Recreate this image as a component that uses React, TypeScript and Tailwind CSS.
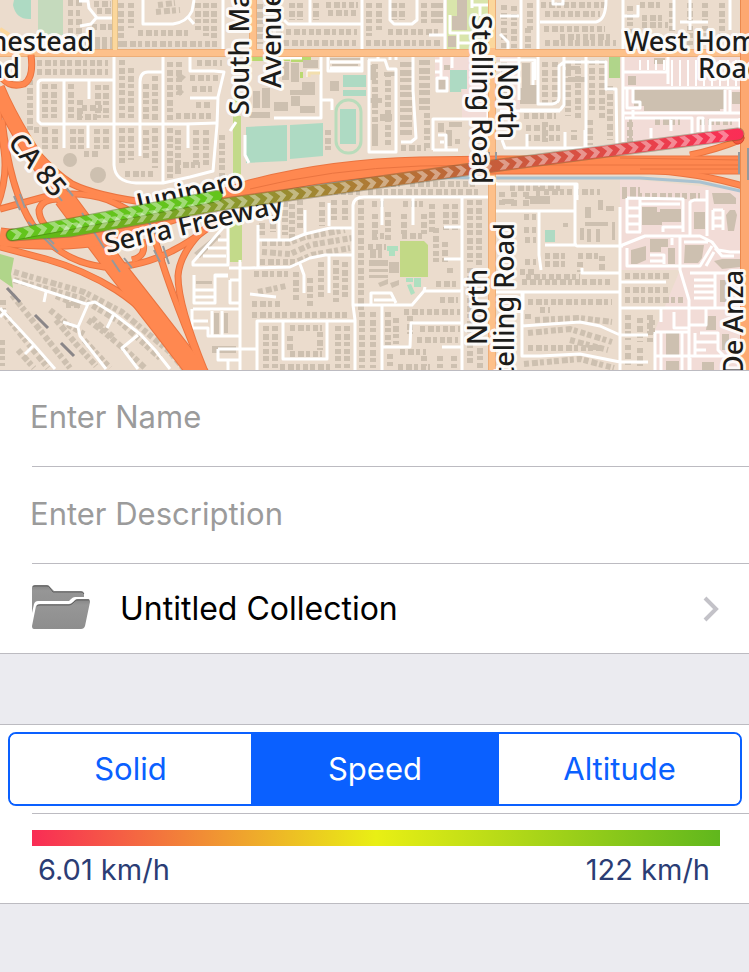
import React, { useState } from "react";

/* ---------- Map data ---------- */

const pinkAreas = [
  "M435 55H488V118H462V80H435Z",
  "M621 56H741V146H621Z",
  "M480 55H520V118H500V60H480Z",
  "M620 178L740 190V370H655V330L680 270H620Z",
];

const parks: { d: string; fill: string }[] = [
  { d: "M14 0H31V19Q16 20 13 5Z", fill: "#aedac3" },
  { d: "M38 0H63V35H38Z", fill: "#c5dabd" },
  { d: "M447 0H491V50H447Z", fill: "#d9e5ab" },
  { d: "M233 116H241V176H233Z", fill: "#c3da8a" },
  { d: "M229 225L242 215V262H230Z", fill: "#c3da8a" },
  { d: "M234 95L238 92V112H234ZM240 64H250V68H240ZM250 57H290V61H250ZM291 57H311V62H291ZM300 72H303V78H300Z", fill: "#b9d970" },
  { d: "M246 127L287 125V161L246 163ZM290 125L323 123V156L290 159Z", fill: "#aedac3" },
  { d: "M343 75H366V87H343ZM343 90H366V96H343ZM340 109H356V144H340Z", fill: "#aedac3" },
  { d: "M450 70H467V89H461V92H450Z", fill: "#aedac3" },
  { d: "M609 55H620V78H609Z", fill: "#b0d58a" },
  { d: "M545 230H555V242H545Z", fill: "#aedac3" },
  { d: "M400 241H424L428 245V277H400Z", fill: "#c2d986" },
  { d: "M387 246H398V251H395V256H389V251H387ZM406 278H413V282H406ZM414 278H421V287H414ZM407 285L411 284L415 293L411 295Z", fill: "#aee0c0" },
  { d: "M0 254L14 258L11 274L13 288L0 279Z", fill: "#b0d58a" },
];

const smallHouses = [
  "M68 3H82M68 13H80M68 22H82M68 31H84M94 4H111M97 11H112M92 27H112M72 40H112M72 46H112",
  "M121 3V50M131 3V28M138 33H190M122 44H220M198 3V30M206 3V36M214 3V40M158 5L175 3M156 12L180 10",
  "M37 63H108M37 72H108M30 80V130M45 84V118M54 84V118M71 84V118M80 100V118M98 85V118M106 85V118M82 108H104M77 117H100",
  "M45 129V150M55 129V150M73 129V150M81 129V150M97 129V150M106 129V150M34 130H50M84 154H98",
  "M122 60V120M131 68V120M146 84V120M155 76V120M170 62V120M179 62V95M122 128V165M131 128V160M146 130V160M155 128V168M170 128V178M178 130V175M197 63H222M190 78H218M192 89H214M196 105H212M176 116H212M196 130V168M206 130V165M222 135V180M125 174H155M175 165H200",
  "M260 4V44M268 30H282M292 3V20M300 3V20M316 3V20M326 5H358M328 13H358M286 32H357M284 43H356M369 3V36M379 3V30M394 3V20M402 3V20M424 3V26M434 3V26M440 3V26M388 32H440M366 43H440",
  "M375 64V145M388 72V145M403 62V135M409 62V135M422 60V110M427 60V150M401 148H426M328 130V150",
  "M530 3V30M541 5H605M545 14H600M504 5V48M514 6V48M528 28V48M544 29H605M545 43H616M560 37H612M640 5H660M642 18H662M642 25H668M690 3V45M705 3V45M722 3V40M630 6V44M672 3V40",
  "M504 62V108M545 62V104M555 62V104M568 62V116M578 60V120M592 60V110M602 60V118M610 86V140M574 140V130M590 120V145M524 116H556M526 128H560M526 138H560M545 122V145M630 122V145M655 122H680M700 122H732",
  "M14 272L84 292L122 312L170 352L184 369M14 280L80 298L120 322L160 358M56 296L80 306M12 295L40 330L70 368M3 300V312L30 346L48 368M50 310L70 326L84 334M56 320L76 344L96 366M88 320L104 332L130 354L146 369M84 340L110 368M92 318L114 338M2 340V366M18 350L34 368M66 305H80",
  "M285 202V235M292 204V240M300 200V230M322 202V226M334 200V222M345 200V222M262 215V236M273 215V232M262 243H288L305 237L345 230M262 252L290 254L310 245L352 238M260 262H296L312 255L350 248M254 274H288M258 292L286 286M252 304H282M310 278V306M321 262V300M336 260V302M345 262V300M296 272V302M252 315H350",
  "M361 200V310M372 204H384M375 214V240M388 212V240M403 204H424M404 214V236M424 214V236M432 204V232M436 228V262M446 204V230M455 204V230M372 236H384M402 236H424M368 247H386M445 242V262M436 284H458M440 300H458M450 268V276",
  "M266 326V368M275 326V368M290 328H322M290 336V352M320 332V350M290 354H322M338 326V368M347 326V368M362 312V368M373 312V368M388 312V345M396 318V344M410 316V334M404 312H460M420 329H460M417 340H458M390 354V366M400 352H426M424 356V366M440 356V368M454 356V368M280 367H330M398 367H430",
  "M470 200V262M479 200V268M470 268V366M480 340V368M502 192V205M514 192V206M526 192V206",
  "M524 217H536M524 230H536M525 240H536M525 262H536M545 256H568M545 264H568M578 256H598M580 262V272M602 256V272M520 272H536M522 282H612M526 277H580",
  "M528 302H612M528 314V322M540 310H550M535 320L580 318L612 322M528 333L570 329L612 342M570 340L608 350M528 348H600M524 364L580 359L614 368",
  "M625 276H670M625 290H668M625 300H684M628 315V340M640 318V342M650 315V342M628 345V366M640 348V366M652 320V336",
  "M622 190H640M622 196H700M544 192H600M368 192H480M510 188H560",
  "M318 192H360M368 184H400M410 184H478",
];

const bigBuildings =
  "M457 0H467V30H452V16H457ZM448 36H456V47H448ZM303 60H318V68H303ZM291 63H299V82H291ZM302 82H315V95H290V90H302ZM291 96H300V106H291ZM300 106H315V113H300ZM274 102H288V111H274ZM262 88H270V108H262ZM282 62H289V80H282ZM253 91H260V108H253ZM246 112H270V118H250ZM330 81H339V91H330ZM330 58H360V60H330ZM332 64H358V66H332ZM370 65H376V80H370ZM384 72H396V76H384ZM370 98H382V103H370ZM380 114H392V121H380ZM372 127H378V146H372ZM438 80H446V90H438ZM438 123H444V132H438ZM449 122H462V127H449ZM446 130H452V146H446ZM455 139H460V144H455ZM444 65H450V70H444ZM522 63H530V85H538V104H520V88H522ZM634 90L724 89V109H720V111H644V106H634ZM732 92H740V104H732ZM628 76H636V85H628ZM654 58H665V64H654ZM566 66H580V70H566ZM568 77H585V82H568ZM629 119H632V140H629ZM644 207H657V212H660V209H681V222H662V225H642V207ZM694 212H705V229H694ZM650 239H668V247H661V252H650ZM668 248H675V264H668ZM631 250L646 246V260L637 264H631ZM685 245H704L702 258L698 263H684ZM712 193H730L736 198V204H714ZM730 210H735L737 215L734 231H728L726 215ZM714 261L722 259H740V267L722 269ZM666 333H679V355H666ZM666 361H679V370H666ZM702 362H714V370H702ZM720 280H727V302H720ZM708 316H716V330H706ZM722 334H729V350H722ZM370 249H376V258H370ZM378 249H382V258H378ZM369 260H388V266H369ZM369 269H388V272H369ZM369 275H388V278H369ZM389 262H399V273H389ZM378 283L388 279V284L380 287ZM390 283L399 280V285L392 288ZM563 223H568V227H563ZM180 73L186 77L182 81L176 77ZM180 88L184 92L180 96L176 92ZM212 346H236V353H212ZM214 320V334H219V313H214ZM224 313H228V333H224ZM196 281H212V284H196ZM194 253L218 233L221 236L200 258ZM525 196H550V204H530V199H525ZM502 199H514V204H502ZM536 187H540V202H536ZM598 200H603V210H598ZM606 206H614V211H606ZM585 222H608V226H585ZM580 228H584V240H580ZM587 229H591V242H587ZM596 229H600V242H596ZM612 222H615V240H612ZM585 207H591V218H585Z";

const streets = [
  "M79 1H88L89 8L97 18H114M97 17L91 24L80 26",
  "M143 0V24H173Q187 22 192 11L194 0M188 17L194 24M223 0V50",
  "M114 55V165Q115 182 136 183H163L190 177L213 171L217 125L218 97L224 72L214 71H190V55",
  "M163 55V182M162 72H148Q140 72 140 82V156M114 80H42Q38 80 38 84V121L41 124H186L217 123",
  "M64 80V148M89 80V99M88 125V148M188 125V148M190 98H218M230 131L236 122M245 135V155L249 163",
  "M284 20L288 24H362M310 0V23M362 0V50M390 0V20L394 24H412L417 20V0M445 0V50M429 35H445",
  "M450 15V33H490M458 33V50M458 43H480M472 5H488M472 0V8M480 4V16",
  "M268 58H302M321 55V118H274M308 77V71H321M328 55V71H362V55M330 62H362M330 68H362",
  "M368 60H385L388 69H396V152H369V60M378 60V56M390 60V56M396 60V56M413 55V90L416 138L411 142H401",
  "M441 55V78H437V91H447V78H441M441 61H435M441 72H435M452 55V68M433 150V119H488V112M433 150H458M438 135H446V150M440 142H444M321 100H332V110",
  "M500 16H519M521 0V50M500 34L508 42V50M538 0V50M540 22H596Q606 20 606 0M553 0V4H563V0",
  "M623 0V50M674 0V30M690 0V20M730 0V30M680 22H708M690 22V30M623 16H638V5",
  "M538 55V104H552Q559 103 559 98V66L564 62H606V89H616L617 150M564 56V105L560 110H520M586 56V148M500 111H560M502 140L505 148H590L617 145V150M527 134V148M565 132V148M585 130V148",
  "M623 56V142M623 72H667V60M623 88H740M668 56V84M623 113H740M625 118H692V134M698 132V118H703V132M710 132V120H740M740 118V130M633 88V102H640V108H627V88M725 90V112M730 90V112M633 118V110M671 120V131M651 128V138",
  "M519 55V100M500 60H535V80M533 62V85",
  "M13 280L86 304L95 302L114 314L140 334L155 350L170 369M46 292L44 302M88 304L78 327L80 336L106 369M63 322L78 327M114 314L107 328M138 335L122 348L138 369M0 308L34 345L55 369M0 317L6 310M34 345L25 354",
  "M193 265H228V222L193 262ZM203 256H226M208 248H228M218 240H228M240 260V370M229 268H250M194 275V303H215V275H228M194 297H216M194 290H216M215 276H228M194 295V303M193 309H240M230 280H240M230 280V303H240M192 309V328H208V336H240M212 311V335M222 311V335M193 321H208M218 349H250M218 349V360H228V370M218 360H240",
  "M258 225V267M279 215V240M305 210V234M329 203V226M257 240H290L305 234L330 228H354M250 268L290 267L310 258L325 255H354M300 264L304 275V293M329 256V293",
  "M250 294L276 297M355 370V320L353 305V205Q354 197 364 197H490M382 197V225M413 197V225M462 197V370M444 227H462M444 259H462",
  "M354 305H412L424 291H462M424 291L425 287M371 305V293H391L396 303M374 300H394M382 305V370M382 347H410L411 323H462M442 347H462M250 349H257V321H354M283 322V359H327V322M257 349V370",
  "M496 211H575V185M575 211V245L577 246H623M539 212V255L541 270M545 245H577M582 268V273H620M496 292H619M620 207V370M522 292V356H540L580 354L620 362H648M522 326L580 322L600 326L620 335H648M523 292V310M496 182V185M496 370V368M523 185M496 184H577V200",
  "M627 198L683 199V232M627 198V232H641M640 198V232M627 208H640M627 216H640M627 224H640M640 204H680M663 232V227H683M620 246L645 236H700L712 242L718 250L730 252H741M627 248V266H700L712 246M680 236V270L689 300V370M690 236V202L694 200H706M707 190V236M713 210H723M713 218H723M713 226H723M723 210V230M713 210V230M620 282H666M620 308H741M715 248L722 256H734M706 266L714 252M684 242H708",
  "M694 280H714M690 273H740M694 286H714M694 292H714M694 298H714M715 273V308M655 332H690M655 332V370M661 332V370M682 332V370M655 356H740M690 358V370M700 333H718V350L724 356M695 333V356M695 342H718M695 350H706M661 308V322M674 312V328H690M706 308V325H690M672 238V245M650 255H664V264M650 261H664",
];

const arterials = ["M0 53H749", "M492 0V370", "M253 0V53"];

const ramps = [
  "M31 55Q34 78 24 84Q10 88 2 78",
  "M-2 112L4 150Q8 178 -3 206",
  "M2 120Q10 190 32 224Q60 262 104 267Q140 268 172 251Q190 242 208 228",
  "M8 112Q36 160 72 184Q96 196 150 203",
  "M0 209L44 197Q80 190 108 200Q136 212 148 226Q156 240 162 262Q176 306 205 374",
  "M62 199Q42 198 39 210Q39 224 58 236",
  "M0 247L46 259Q84 270 116 290Q150 312 178 350",
  "M222 214Q180 246 178 276Q178 306 206 374",
  "M132 260Q148 256 142 240",
];

const freeways: { d: string; w: number }[] = [
  { d: "M-3 88Q16 134 66 202", w: 14 },
  { d: "M64 198L116 268L152 314L203 380", w: 19 },
  { d: "M0 237Q60 244 104 236L180 212L250 189Q330 168 420 166L500 165H749", w: 17 },
];

function gridPath() {
  const parts: string[] = [];
  for (let x = 640; x < 738; x += 8) parts.push(`M${x} 60V${x < 668 ? 70 : 86}`);
  return parts.join("");
}

/* ---------- Recorded track ---------- */

type Point = [number, number];

function chevrons(from: Point, to: Point, step: number) {
  const dx = to[0] - from[0];
  const dy = to[1] - from[1];
  const length = Math.hypot(dx, dy);
  const angle = (Math.atan2(dy, dx) * 180) / Math.PI;
  const marks: { x: number; y: number; angle: number }[] = [];
  for (let s = 4; s < length - 4; s += step) {
    marks.push({ x: from[0] + (dx * s) / length, y: from[1] + (dy * s) / length, angle });
  }
  return marks;
}

const trackStart: Point = [12, 235];
const trackTurn: Point = [217, 196];
const trackBend: Point = [500, 165];
const trackEnd: Point = [738, 134];

function Track() {
  const marks = [
    ...chevrons([60, 230], [225, 204], 13),
    ...chevrons([225, 204], trackBend, 13),
    ...chevrons(trackBend, trackEnd, 13),
    ...chevrons(trackStart, trackTurn, 13),
  ];
  return (
    <g fill="none" strokeLinecap="round" strokeLinejoin="round">
      <defs>
        <linearGradient id="speed" gradientUnits="userSpaceOnUse" x1="12" y1="0" x2="740" y2="0">
          <stop offset="0" stopColor="#5cc014" />
          <stop offset="0.2" stopColor="#75a822" />
          <stop offset="0.34" stopColor="#92922f" />
          <stop offset="0.48" stopColor="#ad7c34" />
          <stop offset="0.64" stopColor="#c36039" />
          <stop offset="0.8" stopColor="#dd4c45" />
          <stop offset="1" stopColor="#fb2d56" />
        </linearGradient>
      </defs>
      <circle cx="738" cy="138" r="6" fill="#f2533f" stroke="#d8472f" />
      <path d="M12 235L70 231L225 204L500 165L738 134" stroke="#5b5030" strokeOpacity="0.4" strokeWidth="13" />
      <path d="M12 235L70 231L225 204L500 165L738 134" stroke="url(#speed)" strokeWidth="11" />
      <path d="M12 235L217 196" stroke="#3f7a12" strokeOpacity="0.5" strokeWidth="12" />
      <path d="M12 235L217 196" stroke="#63c41c" strokeWidth="10" />
      {marks.map((m, i) => (
        <path
          key={i}
          d="M-5 -5H1L6 0L1 5H-5L0 0Z"
          fill="#ffffff"
          fillOpacity="0.4"
          transform={`translate(${m.x} ${m.y}) rotate(${m.angle})`}
        />
      ))}
    </g>
  );
}

/* ---------- Map labels ---------- */

type Label = { text: string; x: number; y: number; rotate?: number; end?: boolean };

const lowerLabels: Label[] = [
  { text: "Junipero", x: 139, y: 213, rotate: -13 },
  { text: "Serra Freeway", x: 107, y: 253, rotate: -13 },
];

const upperLabels: Label[] = [
  { text: "Homestead", x: 94, y: 51, end: true },
  { text: "Road", x: 20, y: 78, end: true },
  { text: "South Mary", x: 249, y: 115, rotate: -90 },
  { text: "Avenue", x: 281, y: 88, rotate: -90 },
  { text: "CA 85", x: 7, y: 143, rotate: 50 },
  { text: "Stelling Road", x: 472, y: 15, rotate: 90 },
  { text: "North", x: 498, y: 63, rotate: 90 },
  { text: "North", x: 487, y: 345, rotate: -90 },
  { text: "Stelling Road", x: 514, y: 223, rotate: -90, end: true },
  { text: "West Homestead", x: 624, y: 51 },
  { text: "Road", x: 698, y: 78 },
  { text: "De Anza", x: 743, y: 375, rotate: -90 },
];

function Labels({ items }: { items: Label[] }) {
  return (
    <g
      className="font-['Noto_Sans',sans-serif] text-[27px] font-medium"
      fill="#1c1c1a"
      stroke="#ffffff"
      strokeWidth="6"
      strokeLinejoin="round"
      strokeOpacity="0.9"
      style={{ paintOrder: "stroke" }}
    >
      {items.map((l, i) => (
        <text
          key={i}
          textAnchor={l.end ? "end" : "start"}
          transform={`translate(${l.x} ${l.y}) rotate(${l.rotate ?? 0})`}
        >
          {l.text}
        </text>
      ))}
    </g>
  );
}

function TrackMap() {
  return (
    <svg
      viewBox="0 0 749 370"
      preserveAspectRatio="xMidYMid slice"
      className="block w-full"
      role="img"
      aria-label="Track map"
    >
      <rect width="749" height="370" fill="#ebdccd" />
      <g fill="#f2dcd7">
        {pinkAreas.map((d) => (
          <path key={d} d={d} />
        ))}
      </g>
      {parks.map((p) => (
        <path key={p.d} d={p.d} fill={p.fill} />
      ))}
      <rect x="336" y="100" width="25" height="53" rx="12" fill="none" stroke="#b9dcbb" strokeWidth="3" />
      <g fill="none" stroke="#cdc0b0" strokeWidth="6" strokeDasharray="5 3 6 2 4 3 5 2">
        {smallHouses.map((d) => (
          <path key={d} d={d} />
        ))}
      </g>
      <path d={bigBuildings} fill="#cdc0b0" />
      <circle cx="70" cy="160" r="7" fill="#cdc0b0" />
      <circle cx="98" cy="175" r="8" fill="#cdc0b0" />
      <path d="M300 186Q350 176 500 178L640 178L700 182L745 192" fill="none" stroke="#a9c2d0" strokeWidth="3" />
      <g fill="none" stroke="#ffffff" strokeWidth="3" strokeLinejoin="round">
        {streets.map((d) => (
          <path key={d} d={d} />
        ))}
      </g>
      <path d={gridPath()} fill="none" stroke="#ffffff" strokeWidth="2" />
      <path d="M309 77V73H320" fill="none" stroke="#f3dfae" strokeWidth="3" />
      <g fill="none" stroke="#edae78" strokeWidth="8">
        <path d="M115 0V50" stroke="#e5c28c" strokeWidth="6" />
        {arterials.map((d) => (
          <path key={d} d={d} />
        ))}
      </g>
      <g fill="none" stroke="#fdc08a" strokeWidth="6">
        <path d="M115 0V50" stroke="#fbd79c" strokeWidth="4" />
        {arterials.map((d) => (
          <path key={d} d={d} />
        ))}
      </g>
      <path d="M492 0V48" stroke="#fbd79c" strokeWidth="6" />
      <path d="M0 29L8 34L14 50" fill="none" stroke="#fbd79c" strokeWidth="4" />
      <g fill="none" stroke="#ea7440" strokeWidth="7">
        {ramps.map((d) => (
          <path key={d} d={d} />
        ))}
        <path d="M640 170Q700 172 749 188M690 155Q715 150 740 140" />
      </g>
      <g fill="none" stroke="#ea7440">
        {freeways.map((f) => (
          <path key={f.d} d={f.d} strokeWidth={f.w + 2} />
        ))}
      </g>
      <g fill="none" stroke="#ff8850" strokeWidth="5">
        {ramps.map((d) => (
          <path key={d} d={d} />
        ))}
        <path d="M640 170Q700 172 749 188M690 155Q715 150 740 140" />
      </g>
      <g fill="none" stroke="#ff8850">
        {freeways.map((f) => (
          <path key={f.d} d={f.d} strokeWidth={f.w} />
        ))}
      </g>
      <path d="M250 189Q330 169 420 166L500 165H740M640 169H740M620 158L740 160" fill="none" stroke="#ea7440" strokeWidth="1" />
      <path d="M745 0V370" stroke="#ea8a50" strokeWidth="10" />
      <path d="M745 0V370" stroke="#fda871" strokeWidth="8" />
      <g fill="none" stroke="#96999c" strokeWidth="2">
        <path d="M739 152V174M748 148V180M489 152V160M496 152V160M54 190L62 201M64 185L73 196M14 196L20 210M20 194L25 208M28 222L58 252M34 224L54 244M82 213L104 248M112 260L120 272M124 258L132 268M154 250L160 262M163 246L169 264M130 208L140 216M146 218L156 234" />
        <path d="M7 288L20 302M35 315L48 328M61 343L74 356" stroke="#8a8688" strokeWidth="3" />
      </g>
      <Labels items={lowerLabels} />
      <Track />
      <Labels items={upperLabels} />
    </svg>
  );
}

/* ---------- Icons ---------- */

function FolderIcon() {
  return (
    <svg viewBox="0 0 58 44" className="h-[44px] w-[58px] shrink-0" aria-hidden="true">
      <defs>
        <linearGradient id="folder" x1="0" y1="0" x2="0" y2="1">
          <stop offset="0" stopColor="#858585" />
          <stop offset="0.2" stopColor="#969696" />
          <stop offset="1" stopColor="#8e8e8e" />
        </linearGradient>
      </defs>
      <path d="M0 28V3Q0 0 3 0H15Q17 0 18 2L22 6H49Q52 6 52 9V12H43Q41 12 39 14L37 16H6Q3 16 2 19Z" fill="url(#folder)" />
      <path d="M1 2Q1 1 3 1H15Q17 1 18 3L21 7H49Q51 7 52 9" fill="none" stroke="#606060" strokeWidth="1" />
      <path d="M4 21Q5 19 8 19H37Q39 19 41 17L43 15Q44 14 46 14H56Q58 14 58 17L53 41Q52 44 49 44H2Q0 44 0 41Z" fill="url(#folder)" />
      <path d="M5 21Q6 20 8 20H37Q39 20 41 18L43 16Q44 15 46 15H57" fill="none" stroke="#606060" strokeWidth="1" />
    </svg>
  );
}

function Chevron() {
  return (
    <svg viewBox="0 0 16 26" className="h-[26px] w-4 shrink-0" aria-hidden="true">
      <path d="M2 2L13 13L2 24" fill="none" stroke="#c3c2c8" strokeWidth="4" />
    </svg>
  );
}

/* ---------- Screen ---------- */

const modes = [
  { name: "Solid", width: "w-[33%]" },
  { name: "Speed", width: "w-[34%]" },
  { name: "Altitude", width: "w-[33%]" },
];

export default function App() {
  const [mode, setMode] = useState("Speed");
  return (
    <main className="min-h-screen bg-[#ebebf0] font-['Inter',sans-serif] text-[32px] leading-10">
      <TrackMap />

      <section className="border-y border-[#bcbbc1] bg-white">
        <div className="pl-8">
          <div className="border-b border-[#bcbbc1]">
            <input
              aria-label="Name"
              placeholder="Enter Name"
              className="-ml-0.5 block h-[95px] w-full bg-transparent pb-1 text-[31px] outline-none placeholder:text-[#9b9b9b]"
            />
          </div>
          <div className="border-b border-[#bcbbc1]">
            <input
              aria-label="Description"
              placeholder="Enter Description"
              className="-ml-0.5 block h-24 w-full bg-transparent pb-1 text-[31px] outline-none placeholder:text-[#9b9b9b]"
            />
          </div>
        </div>
        <button type="button" className="flex h-[89px] w-full items-center pr-[30px] pl-8 text-left">
          <span className="pb-1">
            <FolderIcon />
          </span>
          <span className="ml-[30px] flex-1 text-black">Untitled Collection</span>
          <Chevron />
        </button>
      </section>

      <section className="mt-[70px] border-y border-[#bcbbc1] bg-white">
        <div className="px-2 py-[7px]">
          <div className="mr-[-1px] flex h-[74px] overflow-hidden rounded-lg border-2 border-[#0a60ff] text-[31px]">
            {modes.map((m) => (
              <button
                key={m.name}
                type="button"
                aria-pressed={mode === m.name}
                onClick={() => setMode(m.name)}
                className={`${m.width} ${mode === m.name ? "bg-[#0a60ff] text-white" : "bg-white text-[#0a60ff]"}`}
              >
                {m.name}
              </button>
            ))}
          </div>
        </div>
        <div className="ml-8 border-t border-[#bcbbc1] pt-4 pr-[29px] pb-[13px]">
          <div className="h-4 bg-linear-to-r/srgb from-[#f92c55] via-[#e9ef14] to-[#60b71d]" />
          <div className="flex justify-between px-[6px] pt-1 pr-[10px] text-[29px] text-[#2b3d75]">
            <span>6.01 km/h</span>
            <span>122 km/h</span>
          </div>
        </div>
      </section>
    </main>
  );
}
